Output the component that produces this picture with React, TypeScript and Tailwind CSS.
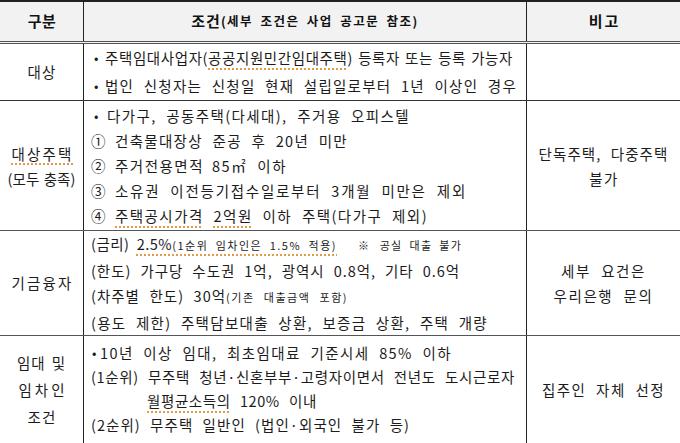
const dot = "underline decoration-dotted decoration-[#e39a4a] underline-offset-[4px] decoration-[1.5px]";
const J = "whitespace-nowrap [text-align-last:justify] text-justify";

export default function App() {
  return (
    <div className="w-[680px] h-[443px] overflow-hidden bg-white text-[#1c1c1c] text-[14.5px] [word-spacing:1px] [font-family:'Noto_Sans_CJK_KR','Noto_Sans_KR',sans-serif]">
      <div className="border-t-2 border-[#222]">
        {/* header */}
        <div className="grid grid-cols-[83px_443px_154px] h-[42px] border-b-[3px] border-double border-[#555] bg-[#f2f2f2] font-bold text-[#111]">
          <div className="flex items-center justify-center text-[15px] tracking-[0.5px] pl-[1px]">구분</div>
          <div className="flex items-center justify-center border-l border-[#222] text-[15px]">
            <span className="tracking-[1px]">조건</span>
            <span className="text-[12.5px] tracking-[1.5px] [word-spacing:3px]">(세부 조건은 사업 공고문 참조)</span>
          </div>
          <div className="flex items-center justify-center border-l border-[#222] text-[15px] tracking-[2px] pl-[2px]">비고</div>
        </div>

        {/* row 1 */}
        <div className="grid grid-cols-[83px_443px_154px] h-[57px] border-b border-[#333]">
          <div className="flex items-center justify-center tracking-[1.2px] pl-[1px]">대상</div>
          <div className="flex flex-col justify-center border-l border-[#222] pl-[7px] leading-[28px]">
            <div className="flex">
              <span className="w-[14px] pl-[3px] text-[13px]">•</span>
              <div className={"w-[408px] tracking-[0.6px] " + J}>
                주택임대사업자(<span className={dot}>공공지원민간임대주택</span>) 등록자 또는 등록 가능자
              </div>
            </div>
            <div className="flex">
              <span className="w-[14px] pl-[3px] text-[13px]">•</span>
              <div className={"w-[412px] tracking-[1.25px] " + J}>법인 신청자는 신청일 현재 설립일로부터 1년 이상인 경우</div>
            </div>
          </div>
          <div className="border-l border-[#222]"></div>
        </div>

        {/* row 2 */}
        <div className="grid grid-cols-[83px_443px_154px] h-[130px] border-b border-[#555]">
          <div className="flex flex-col items-center justify-center leading-[25px]">
            <div className={"tracking-[2.2px] pl-[2px] " + dot}>대상주택</div>
            <div className="tracking-[0.1px]">(모두 충족)</div>
          </div>
          <div className="flex flex-col justify-center border-l border-[#222] pl-[7px] leading-[25px]">
            <div className="flex">
              <span className="w-[16px] pl-[3px] text-[13px]">•</span>
              <div className={"w-[303px] tracking-[1.4px] " + J}>다가구, 공동주택(다세대), 주거용 오피스텔</div>
            </div>
            <div className="flex">
              <span className="w-[24px]">①</span>
              <div className={"w-[233px] tracking-[1.3px] " + J}>건축물대장상 준공 후 20년 미만</div>
            </div>
            <div className="flex">
              <span className="w-[24px]">②</span>
              <div className={"w-[172px] tracking-[1.5px] " + J}>
                주거전용면적 85<span className="ml-[-2px]">㎡</span> 이하
              </div>
            </div>
            <div className="flex">
              <span className="w-[24px]">③</span>
              <div className={"w-[352px] tracking-[1.75px] " + J}>소유권 이전등기접수일로부터 3개월 미만은 제외</div>
            </div>
            <div className="flex">
              <span className="w-[24px]">④</span>
              <div className={"w-[313px] tracking-[1.45px] " + J}>
                <span className={dot}>주택공시가격</span> <span className={dot}>2억원</span> 이하 주택(다가구 제외)
              </div>
            </div>
          </div>
          <div className="flex flex-col items-center justify-center border-l border-[#222] leading-[25px]">
            <div className={"w-[130px] tracking-[1.1px] " + J}>단독주택, 다중주택</div>
            <div className="tracking-[1.5px] pl-[1px]">불가</div>
          </div>
        </div>

        {/* row 3 */}
        <div className="grid grid-cols-[83px_443px_154px] h-[105px] border-b border-[#555]">
          <div className="flex items-center justify-center tracking-[2.2px] pl-[2px]">기금융자</div>
          <div className="flex flex-col justify-center border-l border-[#222] pl-[7px] leading-[25px]">
            <div className="flex items-baseline">
              <div className={"w-[246px] tracking-[0.5px] " + J}>
                (금리) <span className={dot}>2.5%<span className="text-[11px] tracking-[1.5px]">(1순위 임차인은 1.5% 적용)</span></span>
              </div>
              <div className={"ml-[21px] w-[104px] text-[11px] tracking-[1.2px] " + J}>※ 공실 대출 불가</div>
            </div>
            <div className={"w-[369px] tracking-[0.95px] " + J}>(한도) 가구당 수도권 1억, 광역시 0.8억, 기타 0.6억</div>
            <div className={"w-[257px] tracking-[1px] " + J}>
              (차주별 한도) 30억<span className="text-[11px] tracking-[1.5px]">(기존 대출금액 포함)</span>
            </div>
            <div className={"w-[397px] tracking-[1.3px] " + J}>(용도 제한) 주택담보대출 상환, 보증금 상환, 주택 개량</div>
          </div>
          <div className="flex flex-col items-center justify-center border-l border-[#222] leading-[25px]">
            <div className={"w-[85px] tracking-[1.6px] " + J}>세부 요건은</div>
            <div className={"w-[100px] tracking-[1.6px] " + J}>우리은행 문의</div>
          </div>
        </div>

        {/* row 4 */}
        <div className="grid grid-cols-[83px_443px_154px] h-[107px]">
          <div className="flex flex-col items-center justify-center leading-[27px]">
            <div className={"w-[49px] tracking-[1px] " + J}>임대 및</div>
            <div className="tracking-[3px] pl-[3px]">임차인</div>
            <div className="tracking-[1.2px] pl-[1px]">조건</div>
          </div>
          <div className="flex flex-col border-l border-[#222] pl-[7px] pt-[5px] leading-[24px]">
            <div className="flex">
              <span className="w-[9px] pl-[1px] text-[13px]">•</span>
              <div className={"w-[352px] tracking-[1.4px] " + J}>10년 이상 임대, 최초임대료 기준시세 85% 이하</div>
            </div>
            <div className={"w-[424px] tracking-[0.65px] " + J}>(1순위) 무주택 청년·신혼부부·고령자이면서 전년도 도시근로자</div>
            <div className="pl-[56px]">
              <div className={"w-[170px] tracking-[0.6px] " + J}>
                <span className={dot}>월평균소득의</span> 120% 이내
              </div>
            </div>
            <div className={"w-[319px] tracking-[1.05px] " + J}>(2순위) 무주택 일반인 (법인·외국인 불가 등)</div>
          </div>
          <div className="flex items-center justify-center border-l border-[#222]">
            <div className={"w-[123px] tracking-[1.45px] " + J}>집주인 자체 선정</div>
          </div>
        </div>
      </div>
    </div>
  );
}
